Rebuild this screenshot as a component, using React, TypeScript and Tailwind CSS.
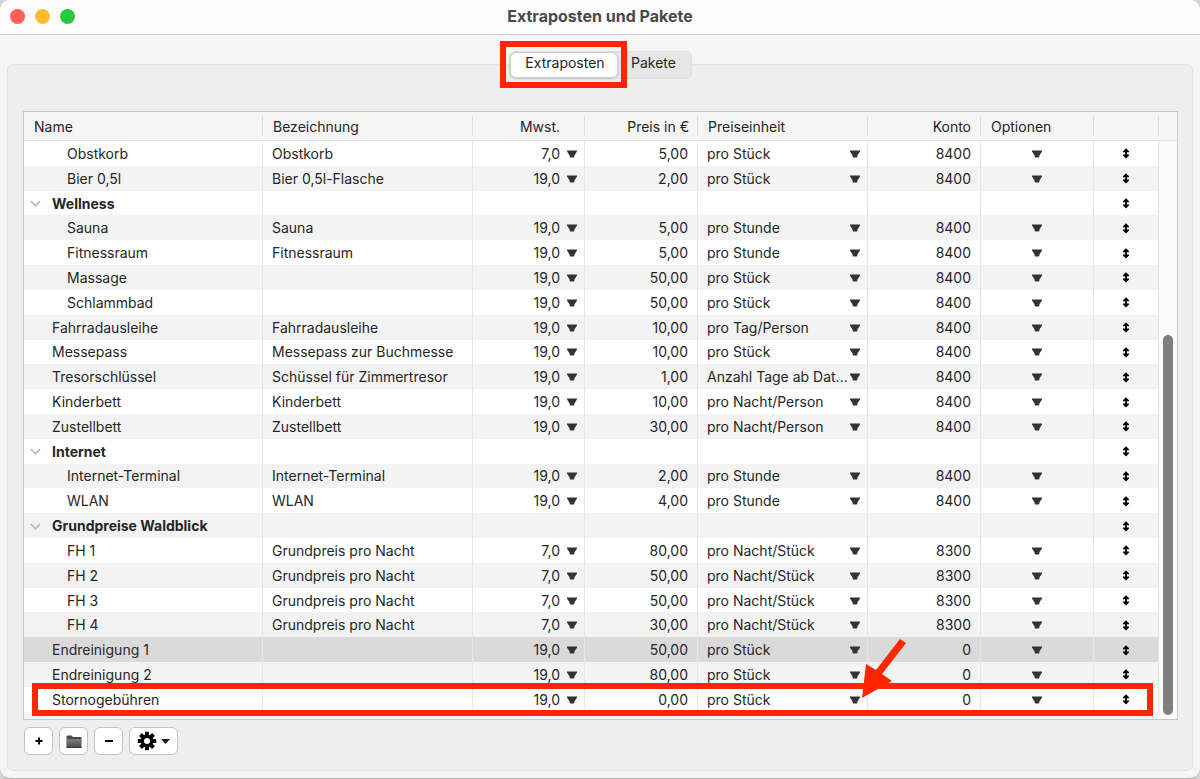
import React from "react";

type Row = {
  name: string;
  level: 0 | 1;
  group?: boolean;
  label?: string;
  vat?: string;
  price?: string;
  unit?: string;
  account?: string;
  selected?: boolean;
};

const item = (
  level: 0 | 1,
  name: string,
  label: string,
  vat: string,
  price: string,
  unit: string,
  account: string,
  selected = false
): Row => ({ level, name, label, vat, price, unit, account, selected });

const rows: Row[] = [
  item(1, "Obstkorb", "Obstkorb", "7,0", "5,00", "pro Stück", "8400"),
  item(1, "Bier 0,5l", "Bier 0,5l-Flasche", "19,0", "2,00", "pro Stück", "8400"),
  { name: "Wellness", level: 0, group: true },
  item(1, "Sauna", "Sauna", "19,0", "5,00", "pro Stunde", "8400"),
  item(1, "Fitnessraum", "Fitnessraum", "19,0", "5,00", "pro Stunde", "8400"),
  item(1, "Massage", "", "19,0", "50,00", "pro Stück", "8400"),
  item(1, "Schlammbad", "", "19,0", "50,00", "pro Stück", "8400"),
  item(0, "Fahrradausleihe", "Fahrradausleihe", "19,0", "10,00", "pro Tag/Person", "8400"),
  item(0, "Messepass", "Messepass zur Buchmesse", "19,0", "10,00", "pro Stück", "8400"),
  item(0, "Tresorschlüssel", "Schüssel für Zimmertresor", "19,0", "1,00", "Anzahl Tage ab Dat...", "8400"),
  item(0, "Kinderbett", "Kinderbett", "19,0", "10,00", "pro Nacht/Person", "8400"),
  item(0, "Zustellbett", "Zustellbett", "19,0", "30,00", "pro Nacht/Person", "8400"),
  { name: "Internet", level: 0, group: true },
  item(1, "Internet-Terminal", "Internet-Terminal", "19,0", "2,00", "pro Stunde", "8400"),
  item(1, "WLAN", "WLAN", "19,0", "4,00", "pro Stunde", "8400"),
  { name: "Grundpreise Waldblick", level: 0, group: true },
  item(1, "FH 1", "Grundpreis pro Nacht", "7,0", "80,00", "pro Nacht/Stück", "8300"),
  item(1, "FH 2", "Grundpreis pro Nacht", "7,0", "50,00", "pro Nacht/Stück", "8300"),
  item(1, "FH 3", "Grundpreis pro Nacht", "7,0", "50,00", "pro Nacht/Stück", "8300"),
  item(1, "FH 4", "Grundpreis pro Nacht", "7,0", "30,00", "pro Nacht/Stück", "8300"),
  item(0, "Endreinigung 1", "", "19,0", "50,00", "pro Stück", "0", true),
  item(0, "Endreinigung 2", "", "19,0", "80,00", "pro Stück", "0"),
  item(0, "Stornogebühren", "", "19,0", "0,00", "pro Stück", "0"),
];

function Triangle() {
  return (
    <svg className="pointer-events-none shrink-0" width="10" height="8" viewBox="0 0 10 8" aria-hidden="true">
      <path d="M0 0.4H10V1.4L7.4 5.4V6.6Q7.4 7.6 6.4 7.6H3.6Q2.6 7.6 2.6 6.6V5.4L0 1.4Z" fill="#333333" />
    </svg>
  );
}

function MoveIcon() {
  return (
    <svg width="8" height="11" viewBox="0 0 8 11" aria-hidden="true">
      <path
        d="M4 0.2L7 3.2V4.2H4.9V6.6H7V7.6L4 10.6L1 7.6V6.6H3.1V4.2H1V3.2Z"
        fill="#000000"
      />
    </svg>
  );
}

function GearIcon() {
  return (
    <svg width="20" height="20" viewBox="-10 -10 20 20" aria-hidden="true">
      {[0, 45, 90, 135].map((a) => (
        <rect key={a} x="-2" y="-9.2" width="4" height="18.4" transform={`rotate(${a})`} fill="#000000" />
      ))}
      <circle r="6.4" fill="#000000" />
      <circle r="3" fill="#ffffff" />
    </svg>
  );
}

function FolderIcon() {
  return (
    <svg width="16" height="13" viewBox="0 0 16 13" aria-hidden="true">
      <defs>
        <linearGradient id="folder" x1="0" y1="0" x2="0" y2="1">
          <stop offset="0" stopColor="#808080" />
          <stop offset="1" stopColor="#505050" />
        </linearGradient>
      </defs>
      <path d="M0.5 1.5Q0.5 0.5 1.5 0.5H5.5L7 2H14.5Q15.5 2 15.5 3V12.5H0.5Z" fill="#4a4a4a" />
      <path d="M1 4H15V12H1Z" fill="url(#folder)" />
      <path d="M0.5 12.5H15.5" stroke="#333333" strokeWidth="1" />
    </svg>
  );
}

function HeadCell({ children, className = "" }: { children?: React.ReactNode; className?: string }) {
  return (
    <th scope="col" className="border-b border-[#e4e4e4] p-0 font-normal">
      <div className={`h-5 border-r border-[#dedede] leading-[22px] ${className}`}>{children}</div>
    </th>
  );
}

const cell = "border-r border-[#e6e6e6] p-0 pt-px leading-5";
const toolButton =
  "flex h-7 items-center justify-center rounded-md border border-[#c3c3c3] bg-white text-black";
const selectClass = "h-5 min-w-0 flex-1 appearance-none bg-transparent p-0 leading-5 outline-none";

export default function App() {
  return (
    <div className="min-h-screen bg-[#d4d4d4] font-[Inter,'Liberation_Sans',sans-serif] text-[14px] text-[#262626]">
      <main className="flex min-h-screen flex-col overflow-hidden rounded-[10px] border-b border-[#b4b4b4] bg-[#f5f5f5]">
        <header className="grid h-[35px] shrink-0 grid-cols-[1fr_auto_1fr] items-center border-b border-[#cfcfcf] bg-[#fcfcfc] px-[10px] pb-[2px]">
          <div className="flex gap-[10px]">
            <button aria-label="Schließen" className="size-[15px] rounded-full bg-[#ff5f57]" />
            <button aria-label="Minimieren" className="size-[15px] rounded-full bg-[#febc2e]" />
            <button aria-label="Maximieren" className="size-[15px] rounded-full bg-[#28c840]" />
          </div>
          <h1 className="text-base font-bold text-[#4a4a4a]">Extraposten und Pakete</h1>
        </header>

        <section className="mx-[7px] mt-[29px] mb-[7px] flex flex-1 flex-col rounded-md border border-[#e3e3e3] bg-[#eeeeee] pr-[14px] pl-[15px]">
          <div className="-mt-[14px] flex justify-center">
            <div role="tablist" className="relative flex h-7 rounded-md border border-[#e0e0e0] bg-[#e6e6e6]">
              <button
                role="tab"
                aria-selected="true"
                className="flex h-[26px] w-[108px] justify-center rounded-md border border-[#cccccc] bg-white pl-[2px] leading-5 shadow-sm"
              >
                Extraposten
              </button>
              <button role="tab" aria-selected="false" className="flex w-[73px] justify-center pt-px pr-[2px] leading-5">
                Pakete
              </button>
              <div className="pointer-events-none absolute -top-[11px] -left-[10px] h-[47px] w-[127px] border-[6px] border-[#ff2600]" />
            </div>
          </div>

          <div className="relative mt-8 border border-[#c8c8c8] bg-white">
            <table className="h-[607px] w-full table-fixed border-separate border-spacing-0">
              <colgroup>
                <col />
                <col className="w-[210px]" />
                <col className="w-[112px]" />
                <col className="w-[113px]" />
                <col className="w-[170px]" />
                <col className="w-[113px]" />
                <col className="w-[113px]" />
                <col className="w-[65px]" />
                <col className="w-[18px]" />
              </colgroup>
              <thead className="bg-[#f5f5f5]">
                <tr className="h-[29px] text-left">
                  <HeadCell className="pl-[10px]">Name</HeadCell>
                  <HeadCell className="pl-[10px]">Bezeichnung</HeadCell>
                  <HeadCell className="pr-6 text-right">Mwst.</HeadCell>
                  <HeadCell className="pr-2 text-right">Preis in €</HeadCell>
                  <HeadCell className="pl-[10px]">Preiseinheit</HeadCell>
                  <HeadCell className="pr-[9px] text-right">Konto</HeadCell>
                  <HeadCell className="pl-[10px]">Optionen</HeadCell>
                  <HeadCell />
                  <th className="border-b border-[#e4e4e4] p-0" aria-label="Bildlauf" />
                </tr>
              </thead>
              <tbody>
                {rows.map((r, i) => (
                  <tr key={r.name} className={r.selected ? "bg-[#dadada]" : i % 2 ? "bg-[#f3f3f3]" : "bg-white"}>
                    <td className={cell}>
                      {r.group ? (
                        <div className="flex items-center pl-[6px] font-bold">
                          <button aria-label={`${r.name} einklappen`} className="w-[22px]">
                            <svg width="11" height="7" viewBox="0 0 11 7" fill="none" aria-hidden="true">
                              <path d="M1 1L5.5 5.8L10 1" stroke="#b4b4b4" strokeWidth="1.5" />
                            </svg>
                          </button>
                          {r.name}
                        </div>
                      ) : (
                        <div className={r.level ? "pl-[43px]" : "pl-7"}>{r.name}</div>
                      )}
                    </td>
                    <td className={`${cell} pl-[9px]`}>{r.label}</td>
                    <td className={cell}>
                      {r.vat && (
                        <div className="flex items-center gap-[7px] pr-[7px]">
                          <select aria-label={`Mwst. ${r.name}`} className={`${selectClass} text-right [text-align-last:right]`}>
                            <option>{r.vat}</option>
                          </select>
                          <Triangle />
                        </div>
                      )}
                    </td>
                    <td className={`${cell} pr-[9px] text-right`}>{r.price}</td>
                    <td className={cell}>
                      {r.unit && (
                        <div className="flex items-center pr-[7px] pl-[9px]">
                          <select aria-label={`Preiseinheit ${r.name}`} className={selectClass}>
                            <option>{r.unit}</option>
                          </select>
                          <Triangle />
                        </div>
                      )}
                    </td>
                    <td className={`${cell} pr-[9px] text-right`}>{r.account}</td>
                    <td className={cell}>
                      {!r.group && (
                        <button aria-label={`Optionen ${r.name}`} className="flex w-full justify-center">
                          <Triangle />
                        </button>
                      )}
                    </td>
                    <td className={cell}>
                      <button aria-label={`${r.name} verschieben`} className="flex w-full justify-center">
                        <MoveIcon />
                      </button>
                    </td>
                    {i === 0 && (
                      <td rowSpan={rows.length + 1} className="bg-[#fafafa] p-0 pb-1 align-bottom">
                        <div className="mx-auto h-[380px] w-[10px] rounded-full bg-[#7f7f7f]" />
                      </td>
                    )}
                  </tr>
                ))}
                <tr className="h-[7px] bg-[#f3f3f3]">
                  <td colSpan={8} className="p-0" />
                </tr>
              </tbody>
            </table>
            <div className="pointer-events-none absolute right-6 bottom-[3px] left-2 h-[33px] border-[6px] border-[#ff2600]" />
            <svg
              className="pointer-events-none absolute right-[270px] bottom-[20px]"
              width="45"
              height="60"
              viewBox="0 0 45 60"
              aria-hidden="true"
            >
              <path d="M38 0L44 4L20 35L30 42L0 59L4 25L14 31Z" fill="#ff2600" />
            </svg>
          </div>

          <div className="flex gap-[6px] pt-[7px] pb-2 pl-px">
            <button aria-label="Hinzufügen" className={`${toolButton} w-[29px]`}>
              <svg width="8" height="8" viewBox="0 0 8 8" aria-hidden="true">
                <path d="M4 0.5V7.5M0.5 4H7.5" stroke="#000000" strokeWidth="2" />
              </svg>
            </button>
            <button aria-label="Neuer Ordner" className={`${toolButton} w-[29px]`}>
              <FolderIcon />
            </button>
            <button aria-label="Entfernen" className={`${toolButton} w-[29px]`}>
              <svg width="8" height="2" viewBox="0 0 8 2" aria-hidden="true">
                <path d="M0 1H8" stroke="#000000" strokeWidth="2" />
              </svg>
            </button>
            <button aria-label="Aktionen" className={`${toolButton} w-[49px] gap-1`}>
              <GearIcon />
              <svg width="9" height="5" viewBox="0 0 9 5" aria-hidden="true">
                <path d="M0 0H9L4.5 5Z" fill="#1a1a1a" />
              </svg>
            </button>
          </div>
        </section>
      </main>
    </div>
  );
}
